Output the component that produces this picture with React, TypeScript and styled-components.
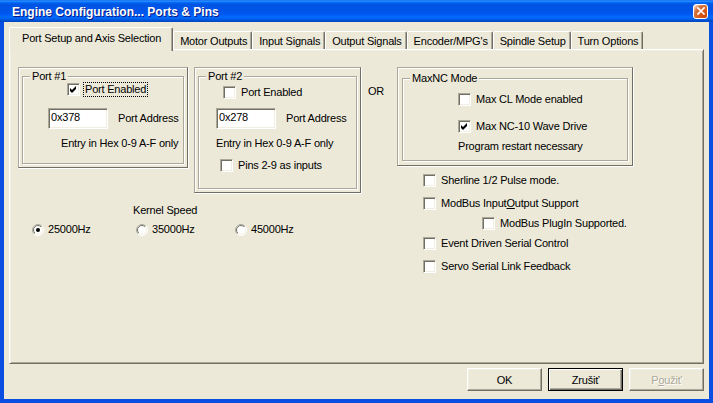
import React, { useId } from "react";
import styled, { createGlobalStyle, css } from "styled-components";

const FACE = "#ECE9D8";
const HILITE = "#FFFFFF";
const LIGHT = "#F1EFE2";
const SHADOW = "#ACA899";
const DARK = "#716F64";
const BLUE = "#0A4FE2";

const GlobalStyle = createGlobalStyle`
  html, body { margin: 0; padding: 0; background: #ffffff; }
  body { font-family: "Liberation Sans", Arial, sans-serif; font-size: 11px; color: #000; }
  *, *::before, *::after { box-sizing: border-box; }
`;

const Window = styled.div`
  width: 713px;
  height: 403px;
  display: flex;
  flex-direction: column;
  overflow: hidden;
  letter-spacing: -0.2px;
`;

const TitleBar = styled.div`
  flex: none;
  height: 22px;
  display: flex;
  align-items: center;
  justify-content: space-between;
  padding: 2px 5px 0 12px;
  background: linear-gradient(180deg, #0058ee 0%, #3593ff 4%, #288eff 6%, #127dff 8%, #036ffc 10%, #0262ee 14%, #0057e5 20%, #0054e3 24%, #0055eb 56%, #005bf5 66%, #026afe 76%, #0062ef 86%, #0052d6 92%, #0046c0 100%);
`;

const Title = styled.span`
  color: #fff;
  font-weight: bold;
  font-size: 12px;
  letter-spacing: 0;
  text-shadow: 1px 1px #0a1883;
  white-space: nowrap;
`;

const CloseButton = styled.div`
  width: 15px;
  height: 15px;
  margin-top: -2px;
  border: 1px solid #fff;
  border-radius: 3px;
  display: flex;
  align-items: center;
  justify-content: center;
  background: radial-gradient(circle at 90% 90%, #cc4600 0%, #dc6527 55%, #cd7546 70%, #ffccb2 90%, #fff 100%);
`;

const Client = styled.div`
  flex: 1;
  display: flex;
  flex-direction: column;
  background: ${FACE};
  border: 4px solid ${BLUE};
  border-top: none;
  padding: 5px 5px 0 5px;
`;

const TabStrip = styled.div`
  display: flex;
  align-items: flex-end;
  height: 24px;
  margin-bottom: -2px;
`;

const Tab = styled.div<{ $active?: boolean }>`
  flex: none;
  height: 20px;
  padding: 3px 4px 0 6px;
  line-height: 13px;
  white-space: nowrap;
  background: ${FACE};
  border: 1px solid ${HILITE};
  border-bottom: none;
  border-right-color: ${DARK};
  border-radius: 2px 2px 0 0;
  box-shadow: inset -1px 0 ${SHADOW};
  ${(p) =>
    p.$active &&
    css`
      position: relative;
      z-index: 2;
      height: 24px;
      padding: 4px 11px 0 12px;
    `}
`;

const Panel = styled.div`
  position: relative;
  z-index: 1;
  flex: none;
  height: 315px;
  background: ${FACE};
  border: 1px solid;
  border-color: ${HILITE} ${DARK} ${DARK} ${HILITE};
  box-shadow: inset 1px 1px ${LIGHT}, inset -1px -1px ${SHADOW};
  padding: 17px 0 0 8px;
  display: flex;
  align-items: flex-start;
`;

const LeftCol = styled.div`
  flex: none;
  width: 343px;
  display: flex;
  flex-direction: column;
`;

const PortsRow = styled.div`
  display: flex;
  align-items: flex-start;
  gap: 6px;
`;

const OrCol = styled.div`
  flex: none;
  width: 36px;
  padding: 18px 0 0 7px;
  line-height: 13px;
`;

const RightCol = styled.div`
  flex: none;
  display: flex;
  flex-direction: column;
`;

const Frame = styled.div<{ $w: number; $h: number; $pad: string }>`
  flex: none;
  width: ${(p) => p.$w}px;
  height: ${(p) => p.$h}px;
  display: flex;
  flex-direction: column;
  padding: ${(p) => p.$pad};
  border: 1px solid;
  border-color: ${SHADOW} ${DARK} ${DARK} ${SHADOW};
  box-shadow: inset 1px 1px ${HILITE}, 1px 1px ${HILITE};
`;

const Group = styled.fieldset`
  flex: 1;
  margin: 0;
  padding: 0;
  min-width: 0;
  border: 1px solid ${SHADOW};
  box-shadow: inset 1px 1px ${HILITE}, 1px 1px ${HILITE};
  display: flex;
  flex-direction: column;
`;

const Legend = styled.legend`
  margin-left: 7px;
  padding: 0 2px;
  height: 13px;
  line-height: 13px;
  background: ${FACE};
`;

const Row = styled.div<{ $indent?: number; $top?: number; $gap?: number }>`
  display: flex;
  align-items: center;
  min-height: 13px;
  line-height: 13px;
  white-space: nowrap;
  margin-top: ${(p) => p.$top ?? 0}px;
  padding-left: ${(p) => p.$indent ?? 0}px;
  gap: ${(p) => p.$gap ?? 0}px;
`;

const Box = styled.span`
  flex: none;
  width: 13px;
  height: 13px;
  display: inline-flex;
  align-items: center;
  justify-content: center;
  background: #fff;
  border: 1px solid;
  border-color: ${SHADOW} ${HILITE} ${HILITE} ${SHADOW};
  box-shadow: inset 1px 1px ${DARK}, inset -1px -1px ${LIGHT};
`;

const CheckText = styled.span<{ $focused?: boolean }>`
  margin: -1px 0 -1px 3px;
  padding: 0 1px;
  line-height: 13px;
  white-space: nowrap;
  border: 1px dotted ${(p) => (p.$focused ? "#000" : "transparent")};
`;

const TextField = styled.div`
  flex: none;
  width: 60px;
  height: 21px;
  background: #fff;
  border: 1px solid;
  border-color: ${SHADOW} ${HILITE} ${HILITE} ${SHADOW};
  box-shadow: inset 1px 1px ${DARK}, inset -1px -1px ${LIGHT};
  padding: 2px 0 0 2px;
  line-height: 13px;
`;

const KernelLabel = styled.div`
  margin-top: 11px;
  padding-left: 115px;
  line-height: 13px;
`;

const RadioRow = styled.div`
  display: flex;
  margin-top: 6px;
  padding-left: 14px;
  line-height: 13px;
`;

const RadioItem = styled.div<{ $w?: number }>`
  flex: none;
  width: ${(p) => (p.$w ? `${p.$w}px` : "auto")};
  display: flex;
  align-items: center;
  gap: 4px;
  white-space: nowrap;
`;

const RadioSvg = styled.svg`
  flex: none;
  display: block;
`;

const ButtonRow = styled.div`
  display: flex;
  justify-content: flex-end;
  gap: 6px;
  margin-top: 4px;
`;

const Button = styled.button<{ $default?: boolean }>`
  width: 75px;
  height: 23px;
  padding: 0;
  font: inherit;
  letter-spacing: inherit;
  color: #000;
  background: ${FACE};
  border: 1px solid;
  border-color: ${HILITE} ${DARK} ${DARK} ${HILITE};
  box-shadow: inset -1px -1px ${SHADOW}, inset 1px 1px ${LIGHT};
  ${(p) =>
    p.$default &&
    css`
      border-color: #000;
      box-shadow: inset 1px 1px ${HILITE}, inset -1px -1px ${DARK}, inset -2px -2px ${SHADOW};
    `}
  &:disabled {
    color: ${SHADOW};
    text-shadow: 1px 1px ${HILITE};
  }
`;

function Check({ checked, focused, children }: { checked?: boolean; focused?: boolean; children: React.ReactNode }) {
  return (
    <>
      <Box>
        {checked && (
          <svg width="7" height="7" viewBox="0 0 7 7">
            <polygon points="0,2 2,4 6,0 6,3 2,7 0,5" fill="#000" />
          </svg>
        )}
      </Box>
      <CheckText $focused={focused}>{children}</CheckText>
    </>
  );
}

function Radio({ checked }: { checked?: boolean }) {
  const id = useId().replace(/[^a-zA-Z0-9]/g, "");
  return (
    <RadioSvg width="12" height="12" viewBox="0 0 12 12">
      <defs>
        <linearGradient id={`ro${id}`} x1="0" y1="0" x2="1" y2="1">
          <stop offset="0.5" stopColor={SHADOW} />
          <stop offset="0.5" stopColor={HILITE} />
        </linearGradient>
        <linearGradient id={`ri${id}`} x1="0" y1="0" x2="1" y2="1">
          <stop offset="0.5" stopColor={DARK} />
          <stop offset="0.5" stopColor={LIGHT} />
        </linearGradient>
      </defs>
      <circle cx="6" cy="6" r="5.5" fill="#fff" stroke={`url(#ro${id})`} />
      <circle cx="6" cy="6" r="4.5" fill="none" stroke={`url(#ri${id})`} />
      {checked && <circle cx="6" cy="6" r="2" fill="#000" />}
    </RadioSvg>
  );
}

const tabs = [
  "Port Setup and Axis Selection",
  "Motor Outputs",
  "Input Signals",
  "Output Signals",
  "Encoder/MPG's",
  "Spindle Setup",
  "Turn Options",
];

export default function App() {
  return (
    <>
      <GlobalStyle />
      <Window>
        <TitleBar>
          <Title>Engine Configuration... Ports &amp; Pins</Title>
          <CloseButton>
            <svg width="8" height="8" viewBox="0 0 8 8">
              <path d="M1 1 L7 7 M7 1 L1 7" stroke="#fff" strokeWidth="1.7" strokeLinecap="square" />
            </svg>
          </CloseButton>
        </TitleBar>
        <Client>
          <TabStrip>
            {tabs.map((t, i) => (
              <Tab key={t} $active={i === 0}>
                {t}
              </Tab>
            ))}
          </TabStrip>
          <Panel>
            <LeftCol>
              <PortsRow>
                <Frame $w={170} $h={101} $pad="2px 3px 3px">
                  <Group>
                    <Legend>Port #1</Legend>
                    <Row $indent={44}>
                      <Check checked focused>
                        Port Enabled
                      </Check>
                    </Row>
                    <Row $indent={25} $top={12} $gap={10}>
                      <TextField>0x378</TextField>
                      <span>Port Address</span>
                    </Row>
                    <Row $indent={38} $top={8}>
                      Entry in Hex 0-9 A-F only
                    </Row>
                  </Group>
                </Frame>
                <Frame $w={167} $h={126} $pad="2px 3px 3px">
                  <Group>
                    <Legend>Port #2</Legend>
                    <Row $indent={24} $top={3}>
                      <Check>Port Enabled</Check>
                    </Row>
                    <Row $indent={17} $top={9} $gap={10}>
                      <TextField>0x278</TextField>
                      <span>Port Address</span>
                    </Row>
                    <Row $indent={17} $top={8}>
                      Entry in Hex 0-9 A-F only
                    </Row>
                    <Row $indent={21} $top={9}>
                      <Check>Pins 2-9 as inputs</Check>
                    </Row>
                  </Group>
                </Frame>
              </PortsRow>
              <KernelLabel>Kernel Speed</KernelLabel>
              <RadioRow>
                <RadioItem $w={104}>
                  <Radio checked />
                  <span>25000Hz</span>
                </RadioItem>
                <RadioItem $w={99}>
                  <Radio />
                  <span>35000Hz</span>
                </RadioItem>
                <RadioItem>
                  <Radio />
                  <span>45000Hz</span>
                </RadioItem>
              </RadioRow>
            </LeftCol>
            <OrCol>OR</OrCol>
            <RightCol>
              <Frame $w={236} $h={99} $pad="4px 4px 4px">
                <Group>
                  <Legend>MaxNC Mode</Legend>
                  <Row $indent={55} $top={8}>
                    <Check>Max CL Mode enabled</Check>
                  </Row>
                  <Row $indent={55} $top={14}>
                    <Check checked>Max NC-10 Wave Drive</Check>
                  </Row>
                  <Row $indent={55} $top={7}>
                    Program restart necessary
                  </Row>
                </Group>
              </Frame>
              <Row $indent={26} $top={8}>
                <Check>Sherline 1/2 Pulse mode.</Check>
              </Row>
              <Row $indent={26} $top={10}>
                <Check>
                  ModBus Input<u>O</u>utput Support
                </Check>
              </Row>
              <Row $indent={85} $top={7}>
                <Check>ModBus PlugIn Supported.</Check>
              </Row>
              <Row $indent={26} $top={7}>
                <Check>Event Driven Serial Control</Check>
              </Row>
              <Row $indent={26} $top={10}>
                <Check>Servo Serial Link Feedback</Check>
              </Row>
            </RightCol>
          </Panel>
          <ButtonRow>
            <Button>OK</Button>
            <Button $default>Zrušiť</Button>
            <Button disabled>
              P<u>o</u>užiť
            </Button>
          </ButtonRow>
        </Client>
      </Window>
    </>
  );
}
